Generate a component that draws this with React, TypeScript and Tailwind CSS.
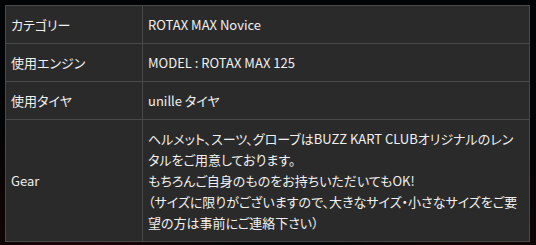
const rows: { label: string; value: React.ReactNode }[] = [
  { label: "カテゴリー", value: "ROTAX MAX Novice" },
  { label: "使用エンジン", value: "MODEL : ROTAX MAX 125" },
  { label: "使用タイヤ", value: "unille タイヤ" },
  {
    label: "Gear",
    value: (
      <>
        ヘルメット、スーツ、グローブはBUZZ KART CLUBオリジナルのレンタルをご用意しております。
        <br />
        もちろんご自身のものをお持ちいただいてもOK!
        <br />
        （サイズに限りがございますので、大きなサイズ・小さなサイズをご要望の方は事前にご連絡下さい）
      </>
    ),
  },
];

export default function App() {
  return (
    <div className="w-[536px] h-[245px] bg-[#030405] bg-[radial-gradient(circle_at_15%_112%,#1e0507_0%,transparent_32%),radial-gradient(circle_at_88%_115%,#1a0406_0%,transparent_28%)] pt-[5px] pl-[5px] font-['Noto_Sans_CJK_JP','Noto_Sans',sans-serif] [font-feature-settings:'palt']">
      <table className="w-[525px] border-collapse bg-[#2a2a2a] text-[13px] leading-[21px] text-[#f0f0f0]">
        <tbody>
          {rows.map((r) => (
            <tr key={r.label}>
              <td className="w-[137px] border border-[#4a4a4a] px-[5px] py-[8px] align-middle">
                {r.label}
              </td>
              <td className="border border-[#4a4a4a] px-[5px] py-[8px] align-middle">
                {r.value}
              </td>
            </tr>
          ))}
        </tbody>
      </table>
    </div>
  );
}
